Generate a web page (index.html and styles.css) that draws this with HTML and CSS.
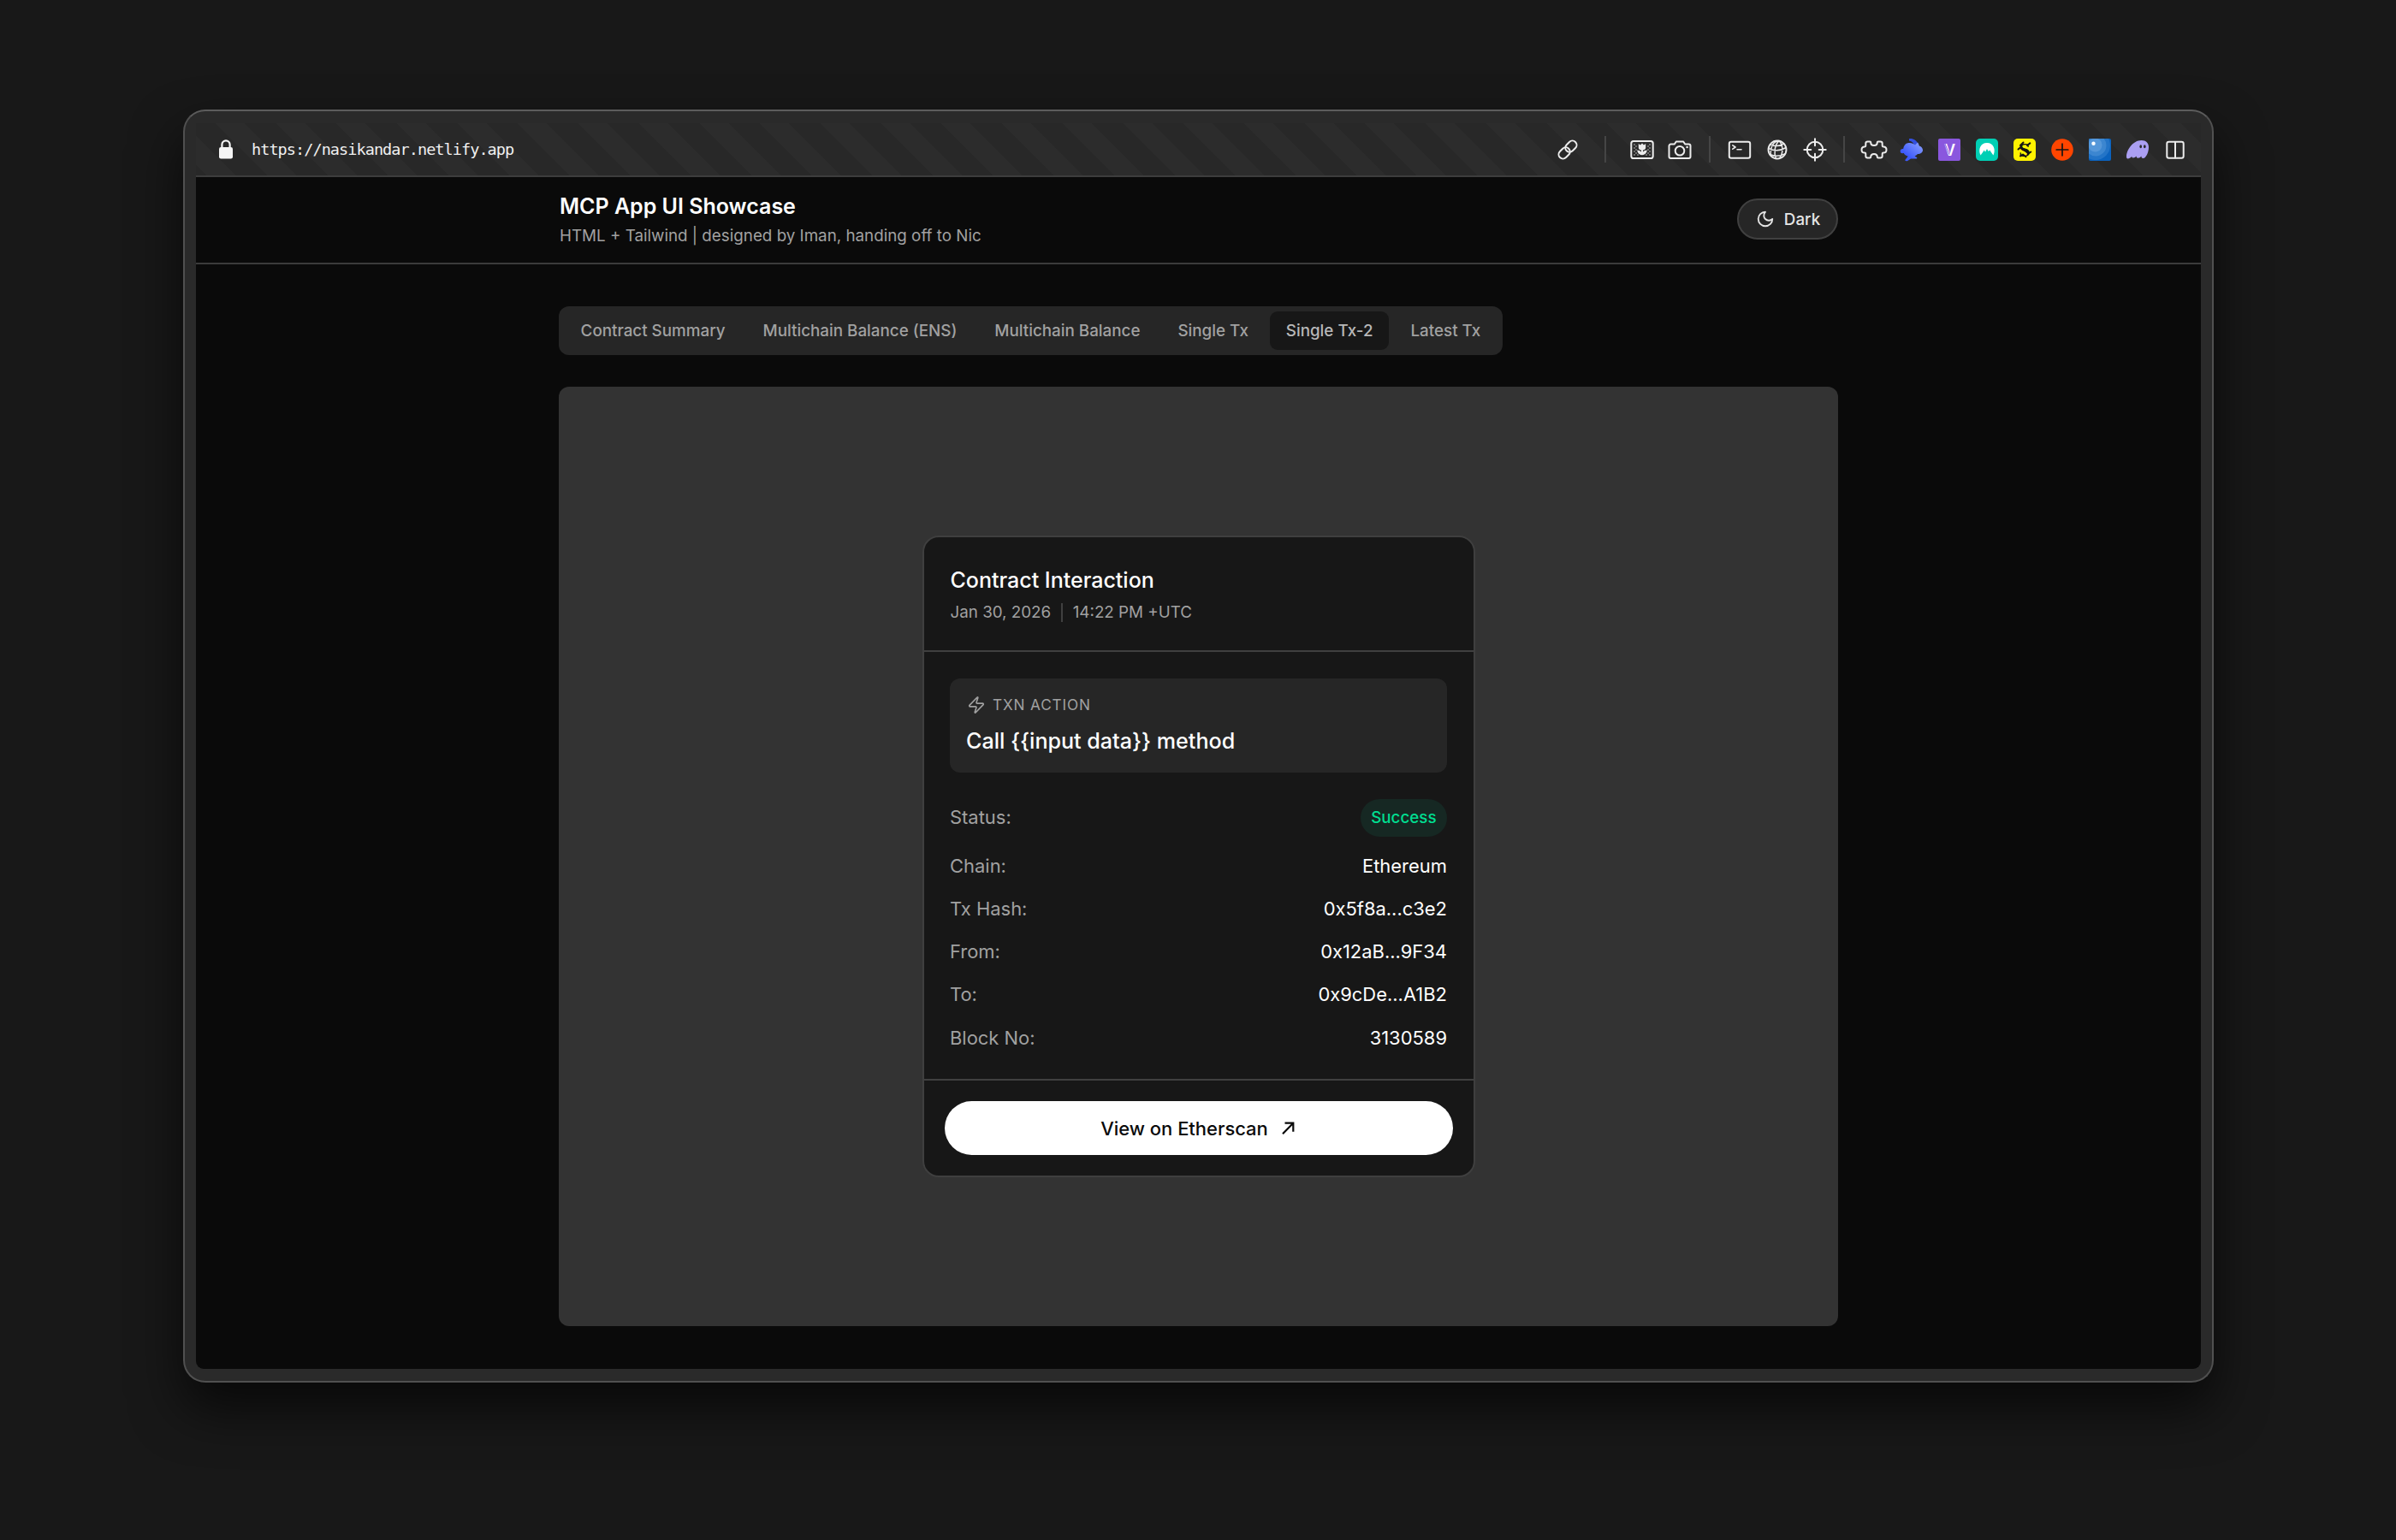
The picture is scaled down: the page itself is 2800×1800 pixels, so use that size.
FILE: index.html
```html
<!DOCTYPE html>
<html lang="en">
<head>
    <meta charset="UTF-8">
    <title>MCP App UI Showcase</title>
    <link rel="stylesheet" href="styles.css">
</head>
<body>
    <div class="window">
        <div class="toolbar">
            <svg class="lock" width="16" height="23" viewBox="0 0 16 23">
                <path d="M3.4 10V6a4.6 4.6 0 0 1 9.2 0v4" fill="none" stroke="#f5f5f5" stroke-width="2.2"/>
                <rect x="0" y="9" width="16" height="13.5" rx="2.2" fill="#f5f5f5"/>
            </svg>
            <span class="url">https://nasikandar.netlify.app</span>

            <div class="icons">
                <!-- link -->
                <svg class="icon" viewBox="0 0 28 28">
                    <g transform="rotate(-45 14 14)">
                        <rect x="1.2" y="9" width="14.6" height="10" rx="5"/>
                        <rect x="12.2" y="9" width="14.6" height="10" rx="5"/>
                    </g>
                </svg>
                <span class="sep wide"></span>
                <!-- picture -->
                <svg class="icon" viewBox="0 0 28 28">
                    <rect x="1.3" y="4" width="25.4" height="20" rx="2.6"/>
                    <path class="fill dim" d="M4 7h2v2H4zM6 9h2v2H6zM4 11h2v2H4zM6 13h2v2H6zM4 15h2v2H4zM6 17h2v2H6zM4 19h2v2H4zM8 19h2v2H8zM22 7h2v2h-2zM20 9h2v2h-2zM22 11h2v2h-2zM20 13h2v2h-2zM22 15h2v2h-2zM20 17h2v2h-2zM22 19h2v2h-2zM18 19h2v2h-2z"/>
                    <path class="fill" d="M9.800 7l2.200 1.600L14 6.600l2 2L18.200 7v4.600c0 1.700-1.200 2.800-3.200 3v2c1.100-1.300 2.800-2 4.800-2-.2 2.900-2.500 5.600-5.800 5.600s-5.600-2.700-5.800-5.600c2 0 3.700.7 4.800 2v-2c-2-.2-3.200-1.300-3.200-3z"/>
                </svg>
                <!-- camera -->
                <svg class="icon" viewBox="0 0 28 28">
                    <path d="M3.500 7.500h4.300l2-3h8.400l2 3h4.300a2 2 0 0 1 2 2v12.500a2 2 0 0 1-2 2h-21a2 2 0 0 1-2-2V9.500a2 2 0 0 1 2-2z"/>
                    <circle cx="14" cy="15.300" r="5.300"/>
                    <circle class="fill" cx="22.600" cy="11" r="1.300"/>
                </svg>
                <span class="sep"></span>
                <!-- terminal -->
                <svg class="icon" viewBox="0 0 28 28">
                    <rect x="1.800" y="4.800" width="24.400" height="19" rx="2.200"/>
                    <path d="M5.800 8.800l3.200 2.200-3.200 2.200M11 13.700h5" stroke-width="1.600"/>
                </svg>
                <!-- globe -->
                <svg class="icon" viewBox="0 0 28 28">
                    <g stroke-width="1.500">
                        <circle cx="14" cy="14" r="10.500" stroke-width="1.900"/>
                        <path d="M16 3.600c-5 4.500-6.300 13.500-3.600 20.800M16 3.600c5 5.500 5.300 14 .5 20.500M16 3.600C9.500 4.500 6 10.500 6.200 20.300M3.700 12.500c7 3.200 14 3 20.500-1M5.600 8c5.300 2.200 11.500 2 16.200-1.200M5.300 19.500c6 2.800 12 2.300 18-.9"/>
                    </g>
                </svg>
                <!-- crosshair -->
                <svg class="icon" viewBox="0 0 28 28">
                    <circle cx="14" cy="14" r="9.300"/>
                    <path d="M14 1.300v8M14 18.700v8M1.300 14h8M18.700 14h8"/>
                </svg>
                <span class="sep"></span>
                <!-- extensions -->
                <svg class="icon puzzle" viewBox="0 0 32 28">
                    <path d="M8.500 4.500h2.700c.6 0 1 .5 1 1.100 0 2 1.500 3.500 3.800 3.500s3.800-1.500 3.800-3.500c0-.6.400-1.100 1-1.100h2.700c1.300 0 2.200.9 2.200 2.200v2.500c0 .8.500 1.200 1.300 1.200 2 0 3.500 1.500 3.500 3.600S29 17.600 27 17.600c-.8 0-1.300.4-1.300 1.200v2.500c0 1.300-.9 2.200-2.200 2.200h-2.700c-.6 0-1-.5-1-1.100 0-2-1.500-3.500-3.800-3.500s-3.800 1.500-3.800 3.500c0 .6-.4 1.100-1 1.100H8.500c-1.300 0-2.200-.9-2.200-2.200v-2.500c0-.8-.5-1.200-1.300-1.200-2 0-3.500-1.500-3.500-3.600S3 10.400 5 10.400c.8 0 1.300-.4 1.300-1.200V6.700c0-1.300.9-2.200 2.200-2.200z"/>
                </svg>
                <!-- rabbit -->
                <svg class="icon brand" viewBox="0 0 28 28">
                    <defs>
                        <linearGradient id="rabbit" x1="0" y1="1" x2="1" y2="0">
                            <stop offset="0.300" stop-color="#3d5afe"/>
                            <stop offset="1" stop-color="#8fa5ff"/>
                        </linearGradient>
                    </defs>
                    <path fill="#3450e0" d="M11 1.200c4.500-.6 9 1.800 11 7l-4.500 2.400C17 6.800 14.500 4.300 11 3.600z"/>
                    <path fill="url(#rabbit)" d="M9.500 6.200c3.500-.7 6.500.4 8.500 2.400l3-3.200c.9 1.500 1.600 2.700 1.800 4 2.700.9 4.200 2.900 4.200 5 0 2.500-2.500 4.400-6 4.600-1 1-2.200 1.900-3.500 2.500l2.500 1.600c.6.500.3 1.500-.6 1.500h-6.400L9.200 27c-2 .6-3.400-.3-2.700-1.300l3.200-4c-2.500-.6-4-1.800-5-3.600-2.500.5-4-.4-4-2.400s1.500-2.900 3.500-2.600c.3-3.400 2.300-6.300 5.300-6.900z"/>
                </svg>
                <!-- V -->
                <svg class="icon brand" viewBox="0 0 28 28">
                    <rect x="1" y="1" width="26" height="26" rx="2" fill="#8a57de"/>
                    <text class="mark v" x="14.500" y="20.500">V</text>
                    <path d="M9 7l5 12.500" stroke="#8a57de" stroke-width="1"/>
                </svg>
                <!-- mountain -->
                <svg class="icon brand" viewBox="0 0 28 28">
                    <rect x="1" y="1" width="26" height="26" rx="5" fill="#00cfb4"/>
                    <path fill="#fff" d="M6.600 20.500C3.200 14 6.500 6 14 6s10.800 8 7.400 14.500l-4.200-6-1.500 1.600L14 13l-2 3.800-1.200-2.300z"/>
                </svg>
                <!-- blackletter S -->
                <svg class="icon brand" viewBox="0 0 28 28">
                    <rect x="1" y="1" width="26" height="26" rx="5" fill="#fff200"/>
                    <text class="mark s" x="14" y="22">S</text>
                    <path d="M6.500 13.500l3-2.500 9 7.500 2.800-2M9 21.500l3-2 3.500 2.700M17 9l3.300-2.600M12.500 5.500l-3.600 3.400" fill="none" stroke="#141414" stroke-width="2"/>
                </svg>
                <!-- plus -->
                <svg class="icon brand" viewBox="0 0 28 28">
                    <circle cx="14" cy="14" r="12.800" fill="#ff4500"/>
                    <path d="M14 7.200v13.600M7.200 14h13.600" stroke="#141414" stroke-width="1.700"/>
                </svg>
                <!-- orb -->
                <svg class="icon brand" viewBox="0 0 28 28">
                    <defs>
                        <clipPath id="tile"><rect x="1" y="1" width="26" height="26" rx="2"/></clipPath>
                    </defs>
                    <g clip-path="url(#tile)">
                        <rect width="28" height="28" fill="#0b62bd"/>
                        <circle cx="9" cy="9" r="17" fill="#2374c7"/>
                        <circle cx="9" cy="9" r="12.500" fill="#3c86d0"/>
                        <circle cx="8.500" cy="8.500" r="8" fill="#5597d9"/>
                        <circle cx="6.500" cy="6.800" r="2.200" fill="#fff"/>
                    </g>
                </svg>
                <!-- ghost -->
                <svg class="icon brand" viewBox="0 0 28 28">
                    <path fill="#ab9ff2" d="M18.500 3c5.500 0 8.500 3.500 8.500 8 0 6.500-3.500 13-6.500 13-1.800 0-2-1.600-2.200-2.600-1 1.300-2.300 2.300-3.800 2.300-1.600 0-2-1.200-1.800-2.300-1.200 1.300-2.600 2-3.800 2-1.300 0-1.700-.9-1.600-1.700C5.600 23.400 4 24.500 2.700 24.500 1.300 24.500 1 23.200 1 22 1 14.500 8.500 3 18.500 3z"/>
                    <ellipse cx="17.700" cy="10.200" rx="1.300" ry="2" fill="#2a2a2a"/>
                    <ellipse cx="22.300" cy="10.200" rx="1.300" ry="2" fill="#2a2a2a"/>
                </svg>
                <!-- split view -->
                <svg class="icon" viewBox="0 0 28 28">
                    <rect x="4.300" y="4.800" width="19.400" height="19" rx="2.200"/>
                    <path d="M14 5v18.600"/>
                </svg>
            </div>
        </div>

        <div class="page">
            <header class="header">
                <div class="header-inner">
                    <div class="heading">
                        <h1>MCP App UI Showcase</h1>
                        <p class="subtitle">HTML + Tailwind | designed by Iman, handing off to Nic</p>
                    </div>
                    <button class="theme-btn">
                        <svg width="22" height="22" viewBox="0 0 24 24">
                            <path d="M12 3a6 6 0 0 0 9 9 9 9 0 1 1-9-9Z"/>
                        </svg>
                        Dark
                    </button>
                </div>
            </header>

            <main class="main">
                <nav class="tabs">
                    <a class="tab">Contract Summary</a>
                    <a class="tab">Multichain Balance (ENS)</a>
                    <a class="tab">Multichain Balance</a>
                    <a class="tab">Single Tx</a>
                    <a class="tab active">Single Tx-2</a>
                    <a class="tab">Latest Tx</a>
                </nav>

                <div class="canvas">
                    <div class="card">
                        <div class="card-header">
                            <h2>Contract Interaction</h2>
                            <div class="date">
                                <span>Jan 30, 2026</span>
                                <span class="date-sep"></span>
                                <span>14:22 PM +UTC</span>
                            </div>
                        </div>

                        <div class="card-body">
                            <div class="action">
                                <div class="action-label">
                                    <svg width="22" height="22" viewBox="0 0 24 24">
                                        <path d="M4 14a1 1 0 0 1-.78-1.630l9.900-10.200a.5.5 0 0 1 .86.460l-1.920 6.020A1 1 0 0 0 13 10h7a1 1 0 0 1 .78 1.630l-9.900 10.200a.5.5 0 0 1-.86-.46l1.920-6.020A1 1 0 0 0 11 14z"/>
                                    </svg>
                                    TXN ACTION
                                </div>
                                <div class="action-text">Call {{input data}} method</div>
                            </div>

                            <div class="rows">
                                <div class="row"><span class="label">Status:</span><span class="badge">Success</span></div>
                                <div class="row"><span class="label">Chain:</span><span>Ethereum</span></div>
                                <div class="row"><span class="label">Tx Hash:</span><span>0x5f8a...c3e2</span></div>
                                <div class="row"><span class="label">From:</span><span>0x12aB...9F34</span></div>
                                <div class="row"><span class="label">To:</span><span>0x9cDe...A1B2</span></div>
                                <div class="row"><span class="label">Block No:</span><span>3130589</span></div>
                            </div>
                        </div>

                        <div class="card-footer">
                            <button class="view-btn">
                                View on Etherscan
                                <svg width="19" height="19" viewBox="0 0 19 19">
                                    <path d="M3 16.200L15 4M5.500 3.700h9.800v10"/>
                                </svg>
                            </button>
                        </div>
                    </div>
                </div>
            </main>
        </div>
    </div>
</body>
</html>
```

FILE: styles.css
```css
* {
    box-sizing: border-box;
    margin: 0;
    padding: 0;
}
body {
    width: 2800px;
    height: 1800px;
    padding: 128px 214px;
    background: #181818;
    font-family: Inter, "Liberation Sans", sans-serif;
    color: #fff;
    overflow: hidden;
}
.window {
    display: flex;
    flex-direction: column;
    width: 2373px;
    height: 1488px;
    padding: 14px 13px 14px;
    border: 2px solid #505050;
    border-top-color: #5c5c5c;
    border-radius: 26px;
    background: #2a2a2a;
    box-shadow: 0 30px 60px rgba(0, 0, 0, 0.65);
}

/* browser toolbar */
.toolbar {
    display: flex;
    align-items: center;
    height: 63px;
    flex-shrink: 0;
    padding: 0 16px 0 27px;
    border-bottom: 2px solid #3d3d3d;
    background: repeating-linear-gradient(45deg, #282828 0 9px, #2c2c2c 9px 33px, #282828 33px 50px);
}
.url {
    margin-left: 22px;
    font-family: "DejaVu Sans Mono", monospace;
    font-size: 18.5px;
    letter-spacing: -0.93px;
    color: #f0f0f0;
}
.icons {
    display: flex;
    align-items: center;
    gap: 16px;
    margin-left: auto;
}
.icon {
    width: 28px;
    height: 28px;
    fill: none;
    stroke: #ececec;
    stroke-width: 2;
    stroke-linejoin: round;
    stroke-linecap: round;
}
.icon .fill {
    fill: #ececec;
    stroke: none;
}
.icon .dim {
    fill: #6e6e6e;
}
.puzzle {
    width: 32px;
    margin: 0 -2px;
}
.brand {
    stroke: none;
}
.mark {
    text-anchor: middle;
    font-family: Inter, sans-serif;
    font-size: 18px;
    font-weight: 600;
    fill: #fff;
}
.mark.s {
    font-family: "Liberation Serif", serif;
    font-size: 24px;
    font-weight: 700;
    fill: #141414;
}
.sep {
    width: 2px;
    height: 31px;
    margin: 0 3.7px;
    background: #454545;
}
.sep.wide {
    margin: 0 12.5px;
}

/* page */
.page {
    flex: 1;
    border-radius: 0 0 9px 9px;
    background: #0a0a0a;
}
.header {
    height: 102px;
    border-bottom: 2px solid #3b3b3b;
}
.header-inner {
    display: flex;
    align-items: center;
    justify-content: space-between;
    width: 1495px;
    height: 98px;
    margin: 0 auto;
}
.heading {
    padding: 2px 0 0 1px;
}
h1 {
    font-size: 25px;
    line-height: 37px;
    font-weight: 600;
}
.subtitle {
    font-size: 18.8px;
    line-height: 32px;
    color: #a1a1a1;
}
.theme-btn {
    display: flex;
    align-items: center;
    justify-content: center;
    gap: 11px;
    width: 118px;
    height: 48px;
    padding-left: 1px;
    border: 2px solid #404040;
    border-radius: 24px;
    background: #262626;
    color: #e5e5e5;
    font: 500 18.8px Inter, sans-serif;
}
.theme-btn svg {
    fill: none;
    stroke: #e5e5e5;
    stroke-width: 2;
    stroke-linejoin: round;
}
.main {
    width: 1495px;
    margin: 0 auto;
    padding-top: 49px;
}
.tabs {
    display: inline-flex;
    gap: 6.3px;
    height: 57px;
    padding: 6.3px 6.8px;
    border-radius: 12px;
    background: #262626;
}
.tab {
    padding: 0 18.8px;
    border-radius: 9px;
    font-size: 18.82px;
    line-height: 45px;
    font-weight: 500;
    color: #a1a1a1;
}
.tab.active {
    background: #171717;
    color: #b8b8b8;
}
.canvas {
    display: flex;
    align-items: center;
    justify-content: center;
    height: 1098px;
    margin-top: 37px;
    border-radius: 12px;
    background: #333;
}

/* transaction card */
.card {
    width: 646px;
    height: 750px;
    border: 2px solid #3f3f3f;
    border-radius: 19px;
    background: #171717;
    overflow: hidden;
}
.card-header {
    height: 134px;
    padding: 31px 31px 0;
    border-bottom: 2px solid #404040;
}
h2 {
    font-size: 25px;
    line-height: 38px;
    font-weight: 500;
}
.date {
    display: flex;
    align-items: center;
    gap: 12px;
    margin-top: 3px;
    font-size: 18.8px;
    line-height: 31px;
    color: #a1a1a1;
}
.date-sep {
    width: 1.5px;
    height: 22px;
    background: #404040;
}
.card-body {
    height: 501px;
    padding: 31px 30.5px 0;
    border-bottom: 2px solid #404040;
}
.action {
    height: 110px;
    padding: 15px 20px 16px 19px;
    border-radius: 12px;
    background: #262626;
}
.action-label {
    display: flex;
    align-items: center;
    gap: 8px;
    padding-left: 1px;
    line-height: 31px;
    font-size: 17.2px;
    letter-spacing: 0.86px;
    color: #a1a1a1;
}
.action-label svg {
    fill: none;
    stroke: #a1a1a1;
    stroke-width: 1.8;
    stroke-linejoin: round;
}
.action-text {
    margin-top: 9px;
    font-size: 25.1px;
    line-height: 37px;
    font-weight: 500;
}
.rows {
    display: flex;
    flex-direction: column;
    gap: 18.8px;
    margin-top: 30.500px;
}
.row {
    display: flex;
    align-items: center;
    justify-content: space-between;
    font-size: 21.95px;
    line-height: 31.4px;
}
.label {
    color: #a1a1a1;
}
.badge {
    padding: 0 12.5px;
    border-radius: 22px;
    background: #162823;
    color: #00de90;
    font-size: 18.8px;
    font-weight: 500;
    line-height: 44.500px;
}
.card-footer {
    padding: 24px;
}
.view-btn {
    display: flex;
    align-items: center;
    justify-content: center;
    gap: 14px;
    width: 100%;
    height: 63px;
    border: none;
    border-radius: 32px;
    background: #fff;
    color: #0a0a0a;
    font: 500 21.95px Inter, sans-serif;
}
.view-btn svg {
    fill: none;
    stroke: #0a0a0a;
    stroke-width: 2.2;
}
```
